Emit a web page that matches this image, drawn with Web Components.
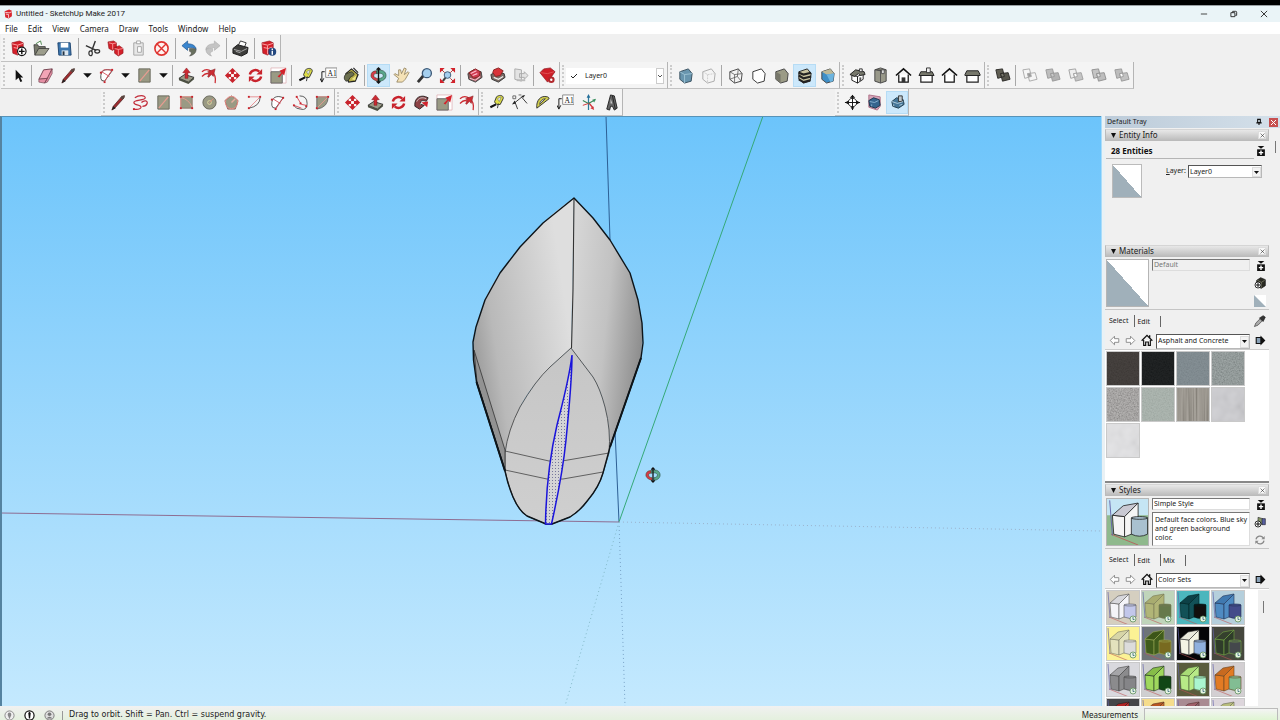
<!DOCTYPE html>
<html lang="en">
<head>
<meta charset="utf-8">
<title>Untitled - SketchUp Make 2017</title>
<style>
  html, body { margin: 0; height: 100%; }
  body { background: #000; font: 8px/12px "Noto Sans", "Open Sans", sans-serif; color: #222; overflow: hidden; }
</style>
</head>
<body>
<sk-app></sk-app>
<script>
const RED = '#c8232c', TAN = '#9a9a84';

const box = (f, s, extra = '') =>
  `<path d="M3 5l9-3 4 5-1 8-7 2-5-4z" fill="${f}" stroke="${s}" stroke-linejoin="round"/>${extra}`;
const cubes = (a, b, c, s) =>
  `<path d="M2 3l7-1 2 8-7 2z" fill="${a}" stroke="${s}" stroke-linejoin="round"/><path d="M7 7l8-1 2 7-8 2z" fill="${b}" stroke="${s}" stroke-linejoin="round"/><path d="M7 7l3-.5 1 3.500-3 .8z" fill="${c}" stroke="${s}"/>`;
const dots = (...p) => p.map(([x, y]) => `<rect x="${x - 1}" y="${y - 1}" width="2" height="2" fill="${RED}"/>`).join('');
const ruby = '<path d="M2 3l8-2 4 2v8l-6 5-5-2z" fill="#d4202a" stroke="#8e1018" stroke-width=".6"/><path d="M2 4l6 1.500 6-2M4 8l5 1 4-1.500M8 6v9" fill="none" stroke="#ffb5b5" stroke-width=".9"/>';
const orbit = '<path d="M7 4C3 4 1 6 1 9s3 5 7 6v-3c-2 0-4-1-4-3s2-2 3-2z" fill="#d63a48" stroke="#442" stroke-width=".6"/><path d="M7 4c6-2 10 1 10 5s-4 6-7 6v-3c2 0 4-1 4-3s-3-3-7-2z" fill="#5aa88c" stroke="#243" stroke-width=".6"/><path d="M9 1v16M7 3l2-2 2 2M7 15l2 2 2-2" stroke="#111" stroke-width="1.400" fill="none"/>';
const home = (roof, wall, extra = '') =>
  `<path d="M4 8v8h10V8" fill="${wall}" stroke="#111" stroke-width="1.300"/><path d="M1 9l8-7 8 7" fill="${roof}" stroke="#111" stroke-width="1.700"/>${extra}`;
const rotate = c => `<path d="M3 8a6 6 0 0 1 10-3M15 10a6 6 0 0 1-10 3" fill="none" stroke="${c}" stroke-width="2.600"/><path d="M16 2v6h-6zM2 16v-6h6z" fill="${c}"/>`;

const ICONS = {
  logo: '<path d="M3 4l8-3 5 2v10l-6 4-6-2z" fill="#d9252e"/><path d="M4 6l7 1 5-2M5 9l5 1v6" fill="none" stroke="#fff" stroke-width="1.300"/>',
  'new': ruby + '<circle cx="12.500" cy="12" r="4.500" fill="#fff" stroke="#111" stroke-width="1.200"/><path d="M9.500 12h6M12.500 9v6" stroke="#111" stroke-width="1.500"/>',
  open: '<path d="M2 16L1 5h4l1 2h7v3" fill="#77796b" stroke="#333" stroke-width=".8"/><path d="M2 16l4-7h11l-5 7z" fill="#9c9d8c" stroke="#333" stroke-width=".8"/><path d="M3 4l5-3 1 4" fill="#fff" stroke="#49854a"/>',
  save: '<path d="M2 3h13l1 13H3z" fill="#3c76ae" stroke="#1d4470"/><path d="M5 3h8v5H5z" fill="#fff"/><path d="M6 11h7v5H6z" fill="#dce6ee"/><path d="M7 12h2v4H7z" fill="#234"/>',
  cut: '<path d="M2 6l11 5M12 1L8 12" stroke="#333" stroke-width="1.500"/><ellipse cx="7" cy="14" rx="1.800" ry="2.600" fill="none" stroke="#333" stroke-width="1.300"/><ellipse cx="14" cy="12" rx="2.600" ry="1.800" fill="none" stroke="#333" stroke-width="1.300"/>',
  copy: '<path d="M1 2l6-1 3 2v5l-4 3-4-2zM8 8l5-2 4 3v5l-5 3-4-3z" fill="#d4202a" stroke="#8a1016" stroke-width=".6"/><path d="M2 3l4 1 4-1M6 4v6M8 9l4 1 5-1M12 10v6" fill="none" stroke="#ffb1b1" stroke-width=".8"/>',
  paste: '<path d="M4 3h10v13H4z" fill="#e7e7e7" stroke="#a5a5a5"/><path d="M7 1h4v3H7zM8 7h4v6H8z" fill="#fff" stroke="#a5a5a5"/>',
  erase: '<circle cx="9" cy="9" r="7" fill="#fff2f0" stroke="#df3430" stroke-width="1.700"/><path d="M4 4l10 10M14 4L4 14" stroke="#df3430" stroke-width="1.500"/>',
  undo: '<path d="M1 6l6-5v3c6 0 9 3 9 6-2-2-5-2-9-2v3z" fill="#3a86cf" stroke="#1d558e" stroke-width=".7"/><path d="M9 9c4 0 6 0 7 1 0 4-3 6-7 7 2-2 3-4 0-5z" fill="#69705f" stroke="#444" stroke-width=".5"/>',
  redo: '<path d="M17 6l-6-5v3C5 4 2 7 2 10c2-2 5-2 9-2v3zM9 9c-4 0-7 0-7 1 0 4 3 6 6 7-2-2-2-4 1-5z" fill="#c4c4c4" stroke="#aaa" stroke-width=".6"/>',
  print: '<path d="M6 7l3-6 6 2-2 5z" fill="#fff" stroke="#333"/><path d="M1 9l5-4 11 3-1 6-6 3-9-3z" fill="#3d3d3b" stroke="#1b1b1b"/><path d="M2 10l8 2 6-3M4 12l5 1.500" fill="none" stroke="#aaa"/>',
  info: ruby + '<circle cx="13" cy="12.500" r="4.200" fill="#24487f"/><path d="M13 11.500v4M13 9v1.500" stroke="#fff" stroke-width="1.500"/>',
  arrow: '<path d="M6 3v11l3-2.500 2 4.500 2-1-2-4h3z" fill="#111"/>',
  eraser: '<path d="M2 13l5-10 9-1-5 10z" fill="#f2a5b6" stroke="#71404c"/><path d="M2 13v3l6 1 3-5zM11 12l5-10v5l-5 9-3 1z" fill="#e58fa4" stroke="#71404c" stroke-width=".7"/>',
  pencil: '<path d="M2 17l1.500-4L13 2l2 2-10 11z" fill="#a02c30" stroke="#4e2221" stroke-width=".8"/><path d="M2 17l1.500-4L6 15z" fill="#222"/><path d="M13 2l2-1 1 1-1 2-2 2-2-2z" fill="#5a4741"/>',
  arc2: `<path d="M3 12C2 3 9 1 15 4L7 15Q3 15 3 12z" fill="#fff" stroke="#444"/><path d="M4 5l8 5M7 15L15 3M3 6l3-3 9 0" fill="none" stroke="#d85560"/>${dots([7, 16], [15, 3], [3, 6])}`,
  rect: `<path d="M3 2h12v14H3z" fill="${TAN}" stroke="#68685b"/><path d="M4 15L14 3" stroke="#e89c91" stroke-width="1.300"/>`,
  rect2: `<path d="M3 3h12v12H3z" fill="${TAN}" stroke="#8c7668"/><path d="M3 4q8 1 12 10M3 3v12M3 3h12" fill="none" stroke="#e89c91"/>${dots([3, 3], [15, 15], [3, 15], [15, 3])}`,
  push: '<path d="M1 12l6-4 10 3-6 5z" fill="#9b9b87" stroke="#333"/><path d="M1 12v2l10 4 6-5v-2l-6 5z" fill="#4c5042"/><path d="M7.500 12V6H5l4-5 4 5h-2.500v6z" fill="#cb2b32" stroke="#7f1018" stroke-width=".5"/>',
  offset: '<path d="M1 5C7 0 17 5 15 17M1 10c3-3 6-4 8-2" fill="none" stroke="#cc2b32" stroke-width="1.300"/><path d="M7 10l2-3-2-2 8-3-2 8-2-2-3 3z" fill="#cb2b32" stroke="#7d1b20" stroke-width=".5"/>',
  move: '<path d="M9 1l4 4h-2.500v2.500H13V5l4 4-4 4v-2.500h-2.500V13H13l-4 4-4-4h2.500v-2.500H5V13L1 9l4-4v2.500h2.500V5H5z" fill="#c8232c"/><path d="M7.500 7.500h3v3h-3z" fill="#fff"/>',
  rotate: rotate(RED),
  scale: '<path d="M1 1h16v16H1z" fill="#fff" stroke="#dba6ac" stroke-width=".7"/><path d="M1 5h12v12H1z" fill="#9a9a84" stroke="#666"/><path d="M8 10l4-4-2-2 7-3-2 8-2-2-3 4z" fill="#d3222b"/>',
  tape: '<path d="M9 3c4-3 8-1 7 2l-3 6c-3 1-6-1-6-3z" fill="#dede47" stroke="#333"/><path d="M10 5l4-2-2 5z" fill="#eee" stroke="#555" stroke-width=".5"/><path d="M8 10l-6 3 1 2 6-3z" fill="#111"/><path d="M11 10l-1 5" stroke="#333"/>',
  text: '<path d="M6 1h12v10H6z" fill="#fff" stroke="#888"/><text x="8" y="9" font-family="Liberation Serif,serif" font-size="8" fill="#111">A1</text><path d="M5 5H2v10M0 12l2 4 2-4" fill="none" stroke="#111"/>',
  paint: '<path d="M3 7l6-5 7 6-3 7-7 1z" fill="#b9b04a" stroke="#222" stroke-width="1.200"/><path d="M4 7c-4 2-3 8 0 8s2-4 5-5 4-3 0-5z" fill="#6b6f4e" stroke="#222" stroke-width=".8"/><path d="M11 1l5 5" stroke="#222" stroke-width="1.200"/><path d="M9 13l5-4-1 5z" fill="#eee484"/>',
  orbit,
  hand: '<path d="M4 16l2-4-5-4 1-1 4 2 0-6 2 0 1 4 3-6 2 1-2 6 4-3 1 1-4 7-3 3z" fill="#f5e2b6" stroke="#8a7a55" stroke-width=".8"/>',
  zoom: '<path d="M2 16l6-7" stroke="#333" stroke-width="3"/><circle cx="11.500" cy="6.500" r="4.800" fill="#a5cfee" stroke="#3d5977" stroke-width="1.400"/>',
  extents: '<path d="M8 10l-4 5" stroke="#444" stroke-width="2.200"/><circle cx="9" cy="8.500" r="3.500" fill="#a5cfee" stroke="#3d5977"/><path d="M1 1h5L1 6zM17 1h-5l5 5zM1 17h5l-5-5zM17 17h-5l5-5z" fill="#d3222b"/><path d="M3 3l3 3M15 3l-3 3M15 15l-3-3" stroke="#a33"/>',
  model1: '<path d="M2 7l6-4 8 2 1 6-7 5-7-3z" fill="#8b5a5a" stroke="#444"/><path d="M3 6l7-4 5 3-1 5-6 2z" fill="#cf3a50" stroke="#822"/><path d="M5 7l6-3M7 9l5-2M4 12l6 2 5-4" stroke="#fbc" stroke-width="1.200" fill="none"/>',
  model2: '<path d="M2 8l6-3 8 2 1 4-7 5-7-3z" fill="#7a6a64" stroke="#333"/><path d="M5 3l5-2 5 3-3 5-5 1-3-4z" fill="#d8343a" stroke="#822"/><path d="M5 11l5 2 5-3" fill="none" stroke="#eee" stroke-width="1.300"/>',
  share: '<path d="M3 2l7 1v12l-7-2zM8 7h5v-2l4 4-4 4v-2H8z" fill="#e3e3e3" stroke="#aaa"/><path d="M5 14h9" stroke="#bbb" stroke-width="2"/>',
  extension: '<path d="M1 6l4-4 7-1 5 4-8 11z" fill="#cf1f28" stroke="#8a1118" stroke-width=".7"/><path d="M2 6l7 1 7-2" fill="none" stroke="#e56a6a" stroke-width=".7"/><circle cx="13" cy="13.500" r="3.500" fill="#b1282d"/><circle cx="13" cy="13.500" r="1.300" fill="#fff"/>',
  xray: box('#6895ae', '#38505f', '<path d="M3 5l5 3 8-1M8 8v9" stroke="#9cc2d3" fill="none"/>'),
  back: box('#f4f4f4', '#a9a9a9', '<path d="M3 5l5 3 8-1M8 8v9" stroke="#ccc" fill="none" stroke-dasharray="2 1"/>'),
  wire: box('none', '#444', '<path d="M3 5l5 3 8-1M8 8v9M12 2l-1 8 4 5M3 13l8-3" stroke="#555" fill="none" stroke-width=".8"/>'),
  hidden: box('#fff', '#333'),
  shaded: box('#9b9b86', '#444', '<path d="M3 5l5 3v9l-5-4z" fill="#77776a"/>'),
  textured: box('#c8c3a0', '#222', '<path d="M3 6l5 2 8-2M3 9l5 3 8-2M3 13l5 3 7-2" stroke="#222" stroke-width="2.200" fill="none"/>'),
  mono: box('#3f8fc7', '#444', '<path d="M3 5l9-3 4 5-8 1z" fill="#bdb896"/><path d="M8 8l8-1-1 8-3 1z" fill="#6cb4df"/>'),
  iso: '<path d="M3 9v5l6 3v-7zM9 10v7l6-4V7z" fill="#fff" stroke="#222"/><path d="M1 8l6-5 9 2 1 3-5 1-2-2-4 3z" fill="#77786c" stroke="#222"/><path d="M11 2h3v3h-3z" fill="#eee" stroke="#333"/><path d="M11 11h2v4h-2z" fill="#555"/>',
  top: '<path d="M3 3l6-2 6 2v12l-6 2-6-2z" fill="#99998a" stroke="#444"/><path d="M9 4v13M3 3l6 1 6-1" stroke="#555"/><path d="M10 3h3v4h-3z" fill="#ddd" stroke="#555"/>',
  front: home('none', '#fff', '<path d="M7 16v-5h4v5z" fill="#333"/>'),
  right: '<path d="M3 9h12v7H3z" fill="#fff" stroke="#222" stroke-width="1.300"/><path d="M1 9l2-4h12l2 4z" fill="#77786c" stroke="#222"/><path d="M9 1h4v5H9z" fill="#eee" stroke="#333"/>',
  rear: home('none', '#fff'),
  left: '<path d="M3 9h12v7H3z" fill="#fff" stroke="#222" stroke-width="1.300"/><path d="M1 8l2-4h12l2 4v1H1z" fill="#77786c" stroke="#222"/>',
  shell: cubes('#615f54', '#57564d', '#77766a', '#2c2b27'),
  isect: cubes('#f5f5f5', '#f5f5f5', '#999', '#aaa'),
  union: cubes('#bdbdbd', '#b3b3b3', '#c9c9c9', '#9a9a9a'),
  subtract: cubes('#eee', '#c4c4c4', '#fff', '#a2a2a2'),
  trim: cubes('#c4c4c4', '#bdbdbd', '#e5e5e5', '#929292'),
  split: cubes('#bcbcbc', '#c2c2c2', '#fff', '#999'),
  freehand: '<path d="M2 16c5 1 9-1 7-3S2 12 2 9s12-2 12-5S7 1 3 4M10 9c3-3 7-2 6 1s-3 3-5 3" fill="none" stroke="#c22c3a" stroke-width="1.300"/>' + dots([2, 16]),
  circle: `<circle cx="9" cy="9" r="7" fill="${TAN}" stroke="#66665a"/><circle cx="9" cy="9" r="2" fill="none" stroke="#ded79d"/><path d="M9 9l4-4" stroke="#df8d7f"/>`,
  polygon: `<path d="M9 2l7 5-3 9H5L2 7z" fill="${TAN}" stroke="#9d655f"/><circle cx="9" cy="9" r="6.500" fill="none" stroke="#e58d86"/><path d="M9 9l4-4" stroke="#e8b0a0" stroke-width="1.500"/>`,
  arcA: `<path d="M15 3q0 10-12 12" fill="none" stroke="#555"/><path d="M3 3h12L3 15" fill="none" stroke="#e58d91"/>${dots([3, 3], [15, 3], [3, 15])}`,
  arcB: `<path d="M3 12C2 3 9 1 15 4L7 15Q3 15 3 12z" fill="#fff" stroke="#555"/><path d="M4 5l8 5M7 16l8-12" stroke="#d44d58"/>${dots([15, 4], [7, 16], [3, 6])}`,
  arcC: `<path d="M8 2q8 0 8 8t-7 6q-5 0-7-4" fill="none" stroke="#555"/><path d="M5 3l5 8 5 1M2 12l8 3" fill="none" stroke="#d44d58"/>${dots([5, 3], [2, 12], [9, 10], [15, 13])}`,
  pie: `<path d="M3 3h12q0 11-12 13z" fill="${TAN}" stroke="#666"/><path d="M15 3L3 15M3 3h12" stroke="#e39a90"/>${dots([3, 3], [15, 3], [3, 15])}`,
  follow: '<path d="M2 13C1 3 9 0 16 4l-2 4c-4-2-7-1-6 3l4 1-5 4z" fill="#8f4346" stroke="#2b2222"/><path d="M4 8c2-4 6-5 10-3M8 11c0-3 4-3 8-2" fill="none" stroke="#ccc"/><path d="M9 9l7-1-1 6z" fill="#d3222b"/>',
  dim: '<path d="M3 10L13 2M4 8l3 8M11 3l6 7" fill="none" stroke="#333"/><path d="M2 2h3v3H2zM8 1h3" fill="none" stroke="#666"/><path d="M1 11l3-4 1 3zM15 1l-4 1 2 2z" fill="#222"/>',
  protractor: '<path d="M3 15C2 7 7 1 14 3c1 0 2 1 2 2z" fill="#d1ce4d" stroke="#333"/><path d="M6 11c0-3 3-6 6-6z" fill="#f1f1e8" stroke="#444"/>',
  axes: '<path d="M9 9l5 6" stroke="#d3343a" stroke-width="1.500"/><path d="M9 9V2M9 9v8" stroke="#2c7a9b" stroke-width="1.300"/><path d="M9 10l7-4M3 7l6 3" stroke="#3b8456" stroke-width="1.200"/><path d="M3 12l6-2" stroke="#d3343a"/><path d="M9 0l2 4H7z" fill="#266f9b"/><path d="M17 5l-2 4-2-3z" fill="#38905e"/><path d="M15 17l-4-2 3-2z" fill="#d3343a"/>',
  text3d: '<path d="M4 16L8 1l4 1 3 13-3 2-2-4H8l-1 4z" fill="#666" stroke="#222"/><path d="M8 5l2 5H8z" fill="#ccc"/><path d="M10 2l3 14" stroke="#222"/>',
  position: '<circle cx="9" cy="9" r="4.500" fill="#fff" stroke="#222"/><path d="M1 9h16M9 1v16" stroke="#111"/><path d="M1 9l4-2v4zM17 9l-4-2v4zM9 1l3 3H6zM9 17l2-3H7z" fill="#111"/>',
  section1: '<path d="M3 1l12 2v10l-3 4-9-3z" fill="#d6a4b9" stroke="#ad7187"/><path d="M3 7l5-3 6 2 1 6-5 3-6-2z" fill="#35658e" stroke="#1d354a"/><path d="M4 8l5 1 4-2M6 11v2" stroke="#9dc4e0" stroke-width=".8" fill="none"/>',
  section2: '<path d="M3 8l5-4 7 2 1 5-6 4-6-2z" fill="#467799" stroke="#223d4c"/><path d="M10 2h4v6h-4z" fill="#c0c9ce" stroke="#333"/><path d="M3 8l6 2 6-2M5 11v2M11 12l3-1" stroke="#cfe2ec" stroke-width=".8" fill="none"/>',
  down: '<path d="M3 6h12l-6 6z" fill="#111"/>',
  min: '<path d="M2 9h14" stroke="#333" stroke-width="2"/>',
  restore: '<path d="M2 6h9v9H2zM6 6V3h7q2 0 2 2v7h-3" fill="none" stroke="#222" stroke-width="2"/>',
  close: '<path d="M2 2l14 14M16 2L2 16" stroke="#222" stroke-width="2"/>',
  pin: '<path d="M6 3h6v7H6zM3 11h12M9 11v5" fill="none" stroke="#111" stroke-width="2.500"/>',
  expand: '<path d="M3 0h12l-6 5z" fill="#111"/><path d="M2 6h14v12H2z" fill="#111"/><path d="M9 8v8M5 12h8" stroke="#fff" stroke-width="2.500"/>',
  createMat: '<path d="M4 5l6-4 7 3v9l-6 4-7-3z" fill="#292a22" stroke="#111"/><path d="M5 5l6 3 5-3M11 8v8" stroke="#8b8b72" fill="none"/><circle cx="6" cy="12" r="4.500" fill="#fff" stroke="#111" stroke-width="1.300"/><path d="M3 12h6M6 9v6" stroke="#111" stroke-width="1.500"/>',
  createStyle: '<path d="M6 2l7 2v8l-7 1z" fill="#889867" stroke="#333"/><path d="M12 4h5v9h-5z" fill="#5961a2" stroke="#223"/><circle cx="6" cy="12" r="4.500" fill="#fff" stroke="#111" stroke-width="1.300"/><path d="M3 12h6M6 9v6" stroke="#111" stroke-width="1.500"/>',
  refresh: '<path d="M3 8a6 6 0 0 1 11-2M15 10a6 6 0 0 1-11 2" fill="none" stroke="#888" stroke-width="1.800"/><path d="M16 3v5h-5zM2 15v-5h5z" fill="#888"/>',
  half: '<path d="M0 0h18v18H0z" fill="#fff"/><path d="M0 0l18 18H0z" fill="#a0b0ba"/>',
  dropper: '<path d="M2 16l2-5 6-6 3 3-6 6z" fill="#aaa" stroke="#444"/><path d="M9 4l2-1 3-2 3 2-2 4-1 2z" fill="#333" stroke="#222"/>',
  prev: '<path d="M2 9l7-7v4h7v6H9v4z" fill="#fff" stroke="#888" stroke-width="1.500"/>',
  next: '<path d="M16 9L9 2v4H2v6h7v4z" fill="#fff" stroke="#888" stroke-width="1.500"/>',
  home: '<path d="M4 9v8h3v-5h4v5h3V9" fill="#fff" stroke="#111" stroke-width="1.800"/><path d="M1 10l8-8 8 8M13 2v4" fill="none" stroke="#111" stroke-width="2"/>',
  details: '<path d="M2 4h8v10H2z" fill="#89a1b7" stroke="#111" stroke-width="1.800"/><path d="M9 1l8 8-8 8z" fill="#111"/>',
  geo: '<circle cx="9" cy="9" r="7.500" fill="#eee" stroke="#888" stroke-width="1.500"/><path d="M9 15L6 8q0-4 3-4t3 4z" fill="#888"/>',
  claim: '<circle cx="9" cy="9" r="7.500" fill="#fff" stroke="#111" stroke-width="2"/><path d="M9 3l2 2-1 9H8L7 5z" fill="#111"/>',
  user: '<circle cx="9" cy="9" r="7.500" fill="#ddd" stroke="#777" stroke-width="1.500"/><circle cx="9" cy="7" r="3" fill="#777"/><path d="M4 14q5-6 10 0" fill="#777"/>'
};

const svg = (name, size = 18) =>
  `<svg width="${size}" height="${size}" viewBox="0 0 18 18" aria-hidden="true">${ICONS[name] || ''}</svg>`;

const BASE = `
  * { box-sizing: border-box; }
  svg { display: block; flex: none; }
  button { font: inherit; color: inherit; border: 0; padding: 0; margin: 0; background: none; display: flex; align-items: center; justify-content: center; }
  input, textarea, select { font: inherit; color: inherit; margin: 0; border-radius: 0; outline: 0; }
`;

class SkElement extends HTMLElement {
  connectedCallback() {
    if (this.shadowRoot) return;
    this.attachShadow({ mode: 'open' }).innerHTML = `<style>${BASE}${this.css()}</style>${this.html()}`;
  }
  css() { return ':host{display:block}'; }
  html() { return '<slot></slot>'; }
  attr(n, d = '') { return this.getAttribute(n) ?? d; }
}

customElements.define('sk-title-bar', class extends SkElement {
  css() { return `
    :host { display: flex; align-items: center; height: 17px; background: #eaf4f7; padding: 0 8px 0 3px; gap: 3px; border-top: 1px solid #9aa0a3; }
    h1 { flex: 1; margin: 0; font: inherit; font-family: Roboto, sans-serif; color: #222; }
    .win { display: flex; gap: 14px; }
    button { width: 16px; height: 14px; }`; }
  html() { return `${svg('logo', 10)}<h1>Untitled - SketchUp Make 2017</h1>
    <div class="win"><button aria-label="Minimize">${svg('min', 8)}</button><button aria-label="Restore">${svg('restore', 8)}</button><button aria-label="Close">${svg('close', 8)}</button></div>`; }
});

customElements.define('sk-menu-bar', class extends SkElement {
  css() { return `
    :host { display: block; background: #fff; height: 12px; }
    nav { display: flex; padding-left: 5px; gap: 10px; }
    button { height: 13px; }`; }
  html() { return `<nav>${this.attr('items').split(',').map(t => `<button>${t}</button>`).join('')}</nav>`; }
});

customElements.define('sk-toolbar', class extends SkElement {
  css() { return `
    :host { display: flex; align-items: center; height: 27px; padding-left: 6px; background: #f4f4f4;
      border-right: 1px solid #b5b5b5; border-bottom: 1px solid #c2c2c2; position: relative; flex: none; }
    :host::before { content: ""; position: absolute; left: 2px; top: 3px; bottom: 2px; border-left: 2px dotted #ccc; }
    :host([spread]) { justify-content: space-between; }
    :host([size="wide"]) { width: 234px; }
    :host([size="mid"]) { width: 144px; }
    :host([size="small"]) { width: 74px; }`; }
});

customElements.define('sk-tool', class extends SkElement {
  css() { return `
    :host { display: block; width: 23px; height: 23px; flex: none; }
    :host([narrow]) { width: 15px; }
    :host([tight]) { width: 22px; }
    button { width: 100%; height: 100%; }
    :host([active]) button { background: #cce8fb; border: 1px solid #b6dcf5; }`; }
  html() { const n = this.attr('icon'); return `<button aria-label="${n}">${svg(n, n === 'down' ? 13 : 17)}</button>`; }
});

customElements.define('sk-separator', class extends SkElement {
  css() { return `
    :host { display: block; width: 1px; height: 21px; margin: 0 2px 0 1px; background: #a8a8a8; flex: none; }
    :host([roomy]) { margin: 0 2px; }`; }
  html() { return ''; }
});

customElements.define('sk-layer-select', class extends SkElement {
  css() { return `
    :host { display: block; width: 101px; padding: 2px 3px 0 0; }
    .combo { display: flex; align-items: center; height: 16px; background: #fff; position: relative; padding-left: 5px; }
    select { flex: 1; height: 16px; border: 0; background: none; appearance: none; padding: 0 0 0 8px; font-size: 7px; }
    .chev { position: absolute; right: 0; top: 0; width: 8px; height: 16px; border: 1px solid #ccc; pointer-events: none; display: flex; align-items: center; justify-content: center; }`; }
  html() { return `<div class="combo"><svg width="6" height="6" viewBox="0 0 6 6"><path d="M0 3l2 2 4-4" fill="none" stroke="#222"/></svg>
    <select aria-label="Active layer"><option>Layer0</option></select>
    <span class="chev"><svg width="6" height="4" viewBox="0 0 6 4"><path d="M1 1l2 2 2-2" fill="none" stroke="#555"/></svg></span></div>`; }
});

const tools = (list, attrs = '') => list.split(' ').map(n => {
  if (n === '|') return `<sk-separator ${attrs}></sk-separator>`;
  const active = n.endsWith('*'), icon = n.replace('*', '');
  return `<sk-tool icon="${icon}" ${icon === 'down' ? 'narrow' : ''} ${active ? 'active' : ''} ${attrs}></sk-tool>`;
}).join('');

customElements.define('sk-toolbars', class extends SkElement {
  css() { return `
    :host { display: block; background: #f0f0f0; padding: 1px 0 0 1px; overflow: hidden; }
    .row { display: flex; }
    .draw { padding-left: 100px; }
    .section { margin-left: 212px; }`; }
  html() { return `
    <div class="row"><sk-toolbar>${tools('new open save | cut copy paste erase | undo redo | print | info', 'roomy')}</sk-toolbar></div>
    <div class="row">
      <sk-toolbar>${tools('arrow | eraser pencil down arc2 down rect down | push offset move rotate scale | tape text paint | orbit* hand zoom extents | model1 model2 share | extension')}</sk-toolbar>
      <sk-toolbar><sk-layer-select></sk-layer-select></sk-toolbar>
      <sk-toolbar>${tools('xray back | wire hidden shaded textured* mono')}</sk-toolbar>
      <sk-toolbar>${tools('iso top front right rear left')}</sk-toolbar>
      <sk-toolbar>${tools('shell | isect union subtract trim split')}</sk-toolbar>
    </div>
    <div class="row draw">
      <sk-toolbar spread size="wide">${tools('pencil freehand rect rect2 circle polygon arcA arcB arcC pie', 'tight')}</sk-toolbar>
      <sk-toolbar spread size="mid">${tools('move push rotate follow scale offset', 'tight')}</sk-toolbar>
      <sk-toolbar spread size="mid">${tools('tape dim protractor text axes text3d', 'tight')}</sk-toolbar>
      <sk-toolbar spread size="small" class="section">${tools('position section1 section2*', 'tight')}</sk-toolbar>
    </div>`; }
});

customElements.define('sk-viewport', class extends SkElement {
  css() { return `
    :host { display: block; flex: 1; min-width: 0; position: relative; overflow: hidden;
      background: linear-gradient(#6cc4fb, #90d3fc 40%, #c4e9fe); border-left: 2px solid #5583a0; border-top: 1px solid #5793b8; }
    svg { width: 100%; height: 100%; }`; }
  html() { return `<svg viewBox="2 117 1099 589" preserveAspectRatio="xMidYMid slice" role="img" aria-label="Model view">
    <defs>
      <linearGradient id="l" x1="0" y1="1" x2="1" y2=".6"><stop offset="0" stop-color="#858585"/><stop offset=".35" stop-color="#b9b9b9"/><stop offset="1" stop-color="#dedede"/></linearGradient>
      <linearGradient id="r" x1="0" y1=".3" x2="1" y2=".65"><stop offset="0" stop-color="#d6d6d6"/><stop offset=".5" stop-color="#c2c2c2"/><stop offset="1" stop-color="#8b8b8b"/></linearGradient>
      <linearGradient id="b" x1="0" y1="0" x2="0" y2="1"><stop offset="0" stop-color="#c6c6c6"/><stop offset="1" stop-color="#cfcfcf"/></linearGradient>
      <pattern id="d" width="3" height="3" patternUnits="userSpaceOnUse"><rect width="3" height="3" fill="#d4d4d6"/><rect width="1" height="1" fill="#77779c"/></pattern>
    </defs>
    <g fill="none" stroke-width="1">
      <path d="M606 116l4 124M615 430l4 92" stroke="#2d5f94"/>
      <path d="M763 116L619 522" stroke="#35a978"/>
      <path d="M1 513l618 9" stroke="#8e6d92"/>
      <path d="M619 522l6 184" stroke="#7aa4c8" stroke-dasharray="1 3"/>
      <path d="M619 522l-54 184" stroke="#83b9c8" stroke-dasharray="1 3"/>
      <path d="M619 522l482 9" stroke="#9bb3cd" stroke-dasharray="1 3"/>
    </g>
    <path d="M574 198Q556 210 543 223L520 247 500 273Q490 287 485 300 478 318 474 340L473 360 477 382 505 471V453Q507 438 520 407 528 390 550 367L571 348z" fill="url(#l)"/>
    <path d="M574 198L593 218 610 240 630 273 638 300 642 323V343L641 358 609 450Q611 430 605 407 601 390 593 377L571 348z" fill="url(#r)"/>
    <path d="M571 348L550 367Q535 381 520 407 508 430 505 453V471Q508 485 513 497 519 511 527 516L546 524H552L570 517Q580 511 588 500 599 487 603 473L609 453Q611 430 605 407 600 388 593 377z" fill="url(#b)" stroke="#3a3a3a" stroke-width=".8"/>
    <path d="M474 350L505 450V470L477 382z" fill="#929292" stroke="#333" stroke-width=".8"/>
    <path d="M574 198L573 290 571.500 348" stroke="#333" stroke-width="1.100" fill="none"/>
    <path d="M505 451l44 10h13l47-8M505 470l42 9h16l40-7" fill="none" stroke="#444" stroke-width=".8"/>
    <path d="M574 198L543 223 520 247 500 273 485 300 476 327 473 342 473.500 360 476.500 382 505 471Q508 485 513 497 519 511 527 516L546 524H552L570 517Q580 511 588 500 599 487 603 473L610 447 641 358 643 343 642 323 638 300 630 273 610 240 593 218z" fill="none" stroke="#0d1419" stroke-width="1.400" stroke-linejoin="round"/>
    <path d="M476.500 382L505 471M610 447L641 358" stroke="#0d1419" stroke-width="2" fill="none"/>
    <path d="M572 355C569 380 562 405 557 425 550 455 546 490 545.500 524H551.500C558 495 563 470 566 440 569 410 572 380 572 355z" fill="url(#d)" stroke="#1a14dc" stroke-width="1.500"/>
    <svg x="645" y="467" width="16" height="16" viewBox="0 0 18 18" style="width:16px;height:16px">${orbit}</svg>
  </svg>`; }
});

customElements.define('sk-panel', class extends SkElement {
  css() { return `
    :host { display: block; }
    header { display: flex; align-items: center; height: 12px; padding: 0 2px 0 5px; gap: 3px; background: linear-gradient(#e8e8e8, #bdbdbd); border: 1px solid #bbb; border-top-color: #d5d5d5; }
    h2 { margin: 0; flex: 1; font: inherit; font-size: 8px; line-height: 10px; color: #222; }
    button { width: 8px; height: 8px; background: #f8f8f8; border: 1px solid #ddd; }`; }
  html() { return `<header><svg width="5" height="5" viewBox="0 0 5 5"><path d="M0 0h5l-2.500 5z" fill="#111"/></svg><h2>${this.attr('heading')}</h2><button aria-label="Close ${this.attr('heading')}">${svg('close', 5)}</button></header><slot></slot>`; }
});

const FIELDS = `
  .pick { position: relative; display: block; }
  .pick select { width: 100%; height: 100%; appearance: none; background: #fff; border: 1px solid #b8b8b8; border-top-color: #555; border-left-color: #555; padding: 0 0 0 1px; line-height: 12px; }
  .pick i { position: absolute; right: 1px; top: 2px; bottom: 1px; width: 9px; background: #f3f3f3; border: 1px solid #ddd; display: flex; align-items: center; justify-content: center; pointer-events: none; }
  .diag { background: linear-gradient(to top right, #a0b0ba 50%, #fff 50%); border: 1px solid #bbb; }
`;
const DOWN = '<i><svg width="5" height="3" viewBox="0 0 5 3"><path d="M0 0h5L2.500 3z" fill="#111"/></svg></i>';

customElements.define('sk-entity-info', class extends SkElement {
  css() { return FIELDS + `
    :host { display: block; height: 104px; padding: 4px 3px 0 1px; }
    .top { display: flex; justify-content: space-between; align-items: center; height: 12px; padding-left: 5px; }
    b { color: #111; font-size: 8px; }
    hr { margin: 1px 12px 5px 0; border: 0; border-top: 1px solid #b5b5b5; }
    .row { display: flex; align-items: flex-start; padding: 0 4px 0 6px; }
    .diag { width: 30px; height: 34px; margin-right: 24px; }
    label { margin-top: 1px; width: 22px; }
    .pick { flex: 1; height: 13px; margin-top: 1px; }`; }
  html() { return `<div class="top"><b>28 Entities</b><button aria-label="Details">${svg('expand', 10)}</button></div><hr>
    <div class="row"><div class="diag"></div><label for="layer"><u>L</u>ayer:</label><span class="pick"><select id="layer"><option>Layer0</option></select>${DOWN}</span></div>`; }
});

/* Header block shared by the Materials and Styles panels. */
customElements.define('sk-preview', class extends SkElement {
  css() { return FIELDS + `
    :host { display: flex; gap: 3px; height: 53px; padding: 2px 3px 0 1px; border-bottom: 1px solid #c5c5c5; }
    .thumb { width: 43px; height: 48px; overflow: hidden; flex: none; border: 1px solid #b5b5b5; }
    .fields { width: 98px; display: flex; flex-direction: column; gap: 2px; }
    input, textarea { width: 100%; background: #fff; border: 1px solid #ddd; border-top-color: #777; border-left-color: #777; padding: 0 0 0 1px; display: block; }
    input { height: 12px; }
    input:disabled { background: #f0f0f0; color: #777; }
    textarea { height: 34px; line-height: 9px; resize: none; overflow: hidden; padding: 2px 0 2px 2px; }
    .side { flex: 1; display: flex; flex-direction: column; align-items: flex-end; gap: 6px; padding-top: 2px; }`; }
  html() {
    const style = this.hasAttribute('styles');
    const icons = style ? ['expand', 'createStyle', 'refresh'] : ['expand', 'createMat', 'half'];
    return `<div class="thumb ${style ? '' : 'diag'}">${style ? houseSvg('#c5e5f4,#f5f5f5,#c9c9d3,#a9c1d0,#222', 0, 46) : ''}</div>
      <div class="fields"><input aria-label="Name" value="${style ? 'Simple Style' : 'Default'}" ${style ? '' : 'disabled'}>
      ${style ? '<textarea aria-label="Description">Default face colors. Blue sky and green background color.</textarea>' : ''}</div>
      <div class="side">${icons.map(n => `<button aria-label="${n}">${svg(n, n === 'expand' ? 10 : 12)}</button>`).join('')}</div>`;
  }
});

function houseSvg(spec, badge = 1, size = 34) {
  const [bg, front, top, cyl, line] = spec.split(',');
  const ground = badge ? '' : '<path d="M0 12h34v22H0z" fill="#8fb98d"/>';
  return `<svg width="${size}" height="${size}" viewBox="0 0 34 34" preserveAspectRatio="none" aria-hidden="true"><rect width="34" height="34" fill="${bg}"/>${ground}
    <path d="M3 26l20 8" stroke="#b55" stroke-width=".6" fill="none"/><path d="M2 1l2 26" stroke="#66a" stroke-width=".7"/>
    <path d="M4 12l9 1v15L5 26z" fill="${front}" stroke="${line}" stroke-width=".6"/>
    <path d="M4 12L12 5l11-2-10 10z" fill="${top}" stroke="${line}" stroke-width=".6"/>
    <path d="M13 13L23 3v21l-10 4z" fill="${front}" stroke="${line}" stroke-width=".6"/>
    <path d="M18 14v12q6 3 12 0V14z" fill="${cyl}" stroke="${line}" stroke-width=".6"/><ellipse cx="24" cy="14" rx="6" ry="1" fill="${cyl}" stroke="${line}" stroke-width=".6"/>
    ${badge ? '<circle cx="27" cy="28" r="3" fill="#e8f4e4" stroke="#5f8f5c" stroke-width=".8"/><path d="M27 26v2.500h1.500" stroke="#367" stroke-width=".8" fill="none"/>' : ''}</svg>`;
}

function textureSvg(spec) {
  const [color, grain, kind] = spec.split(',');
  const freq = kind === 'wood' ? '0.5 0.01' : kind === 'soft' ? '0.08' : '0.7';
  return `<svg width="34" height="34" viewBox="0 0 34 34" aria-hidden="true"><filter id="n" x="0" y="0" width="1" height="1"><feTurbulence type="fractalNoise" baseFrequency="${freq}" numOctaves="2"/><feColorMatrix values="1 0 0 0 0 1 0 0 0 0 1 0 0 0 0 0 0 0 0 1"/></filter>
    <rect width="34" height="34" fill="${color}"/><rect width="34" height="34" filter="url(#n)" opacity="${grain}"/></svg>`;
}

customElements.define('sk-swatch', class extends SkElement {
  css() { return `
    :host { display: block; width: 34px; height: 35px; }
    button { width: 34px; height: 35px; padding: 1px; border: 1px solid #c9c9c9; background: #e5e5e5; overflow: hidden; }`; }
  html() { return `<button aria-label="${this.attr('kind')} swatch">${this.attr('kind') === 'style' ? houseSvg(this.attr('spec')) : textureSvg(this.attr('spec'))}</button>`; }
});

customElements.define('sk-browser', class extends SkElement {
  css() { return FIELDS + `
    :host { display: block; }
    .tabs { display: flex; align-items: center; height: 22px; padding: 0 3px 0 4px; }
    .tabs button { height: 12px; padding-right: 6px; }
    .tabs button:not(:first-child) { border-left: 1px solid #666; padding: 1px 10px 0 2px; }
    .tabs .end { border-left: 1px solid #666; height: 11px; flex: 1; }
    .nav { display: flex; align-items: center; height: 16px; padding: 0 3px 0 4px; gap: 5px; }
    .nav .pick { width: 96px; height: 15px; margin: 2px 0 0 -2px; }
    .nav button { flex: none; }
    .nav .more { margin-left: auto; }
    .list { height: 132px; margin-top: 1px; padding-top: 1px; background: #fff; border-top: 1px solid #ccc; display: flex; justify-content: space-between; }
    .grid { display: grid; grid-template-columns: repeat(4, 34px); gap: 1px; padding-left: 1px; align-content: start; }
    .bar { width: 11px; background: #f0f0f0; padding: 11px 5px; }
    .bar::before { content: ""; display: block; height: 12px; width: 1px; background: #777; }`; }
  html() {
    const kind = this.attr('kind'), tabs = this.attr('tabs').split(',');
    return `<div class="tabs">${tabs.map(t => `<button>${t}</button>`).join('')}<span class="end"></span>${kind === 'material' ? svg('dropper', 13) : ''}</div>
    <div class="nav"><button aria-label="Back">${svg('prev', 11)}</button><button aria-label="Forward">${svg('next', 11)}</button><button aria-label="In model">${svg('home', 12)}</button>
      <span class="pick"><select aria-label="Collection"><option>${this.attr('collection')}</option></select>${DOWN}</span><button class="more" aria-label="Details">${svg('details', 11)}</button></div>
    <div class="list"><div class="grid">${this.attr('specs').split(';').map(s => `<sk-swatch kind="${kind}" spec="${s}"></sk-swatch>`).join('')}</div>${kind === 'style' ? '<div class="bar"></div>' : ''}</div>`;
  }
});

customElements.define('sk-tray', class extends SkElement {
  css() { return `
    :host { display: flex; flex-direction: column; width: 175px; background: #f0f0f0; overflow: hidden; flex: none; font-size: 7px; }
    .head { display: flex; align-items: center; height: 12px; flex: none; padding: 0 2px; background: linear-gradient(90deg, #bccbd9, #d4e0ea); gap: 6px; }
    .head span { flex: 1; line-height: 12px; }
    .head .x { width: 9px; height: 9px; background: #c75050; color: #fff; }
    .body { display: flex; flex: 1; min-height: 0; padding-top: 1px; }
    .panels { width: 164px; overflow: hidden; }
    .bar { width: 1px; height: 12px; margin: 12px 0 0 6px; background: #777; }
    .line { border-bottom: 2px solid #888; margin-bottom: 1px; }`; }
  html() { return `<div class="head"><span>Default Tray</span><button aria-label="Pin">${svg('pin', 8)}</button><button class="x" aria-label="Close tray"><svg width="5" height="5" viewBox="0 0 5 5"><path d="M0 0l5 5M5 0L0 5" stroke="#fff"/></svg></button></div>
    <div class="body"><div class="panels">
      <sk-panel heading="Entity Info"><sk-entity-info></sk-entity-info></sk-panel>
      <sk-panel heading="Materials"><sk-preview></sk-preview>
        <sk-browser class="line" kind="material" tabs="Select,Edit" collection="Asphalt and Concrete"
          specs="#35302d,.1,fine;#0c0f10,.1,fine;#78848a,.12,fine;#818c8b,.3,fine;#979492,.4,fine;#a5b0a9,.15,fine;#827a6c,.45,wood;#cdcdd1,.15,soft;#e3e3e5,.12,soft"></sk-browser></sk-panel>
      <sk-panel heading="Styles"><sk-preview styles></sk-preview>
        <sk-browser kind="style" tabs="Select,Edit,Mix" collection="Color Sets"
          specs="#d5cfc0,#f4f4f8,#d8d8dd,#c2c7ea,#555;#c0d5bb,#b1b577,#a8ac70,#66794b,#775;#4cb6bd,#125157,#0d4046,#120f0d,#022;#b5cfdc,#4f8bc2,#4079b0,#434b8a,#235;#fcf294,#e3e2bd,#d7d5a7,#dcdcdc,#776;#6e7478,#405c1c,#3c5518,#786a20,#9a5;#050507,#f4f4e4,#e9e9dc,#8fb0de,#333;#45473d,#2f3c2a,#35402d,#44484c,#7a4;#d9d9de,#8b8b8d,#a5a5a8,#858588,#444;#cfcfd0,#9fd85d,#86bd48,#114715,#232;#5a5c3d,#b7ea87,#a9dc76,#aaf5cf,#453;#d3cfd2,#e27b24,#c76a20,#82bd93,#642;#454548,#c33030,#b22222,#c33030,#222;#f5dc8c,#ca6b30,#b95522,#a83e20,#532;#a98b92,#8b636b,#a0606a,#8b636b,#533;#ddd6dc,#c9cd8c,#b9bd7c,#c9cd8c,#665"></sk-browser></sk-panel>
    </div><div class="bar"></div></div>`; }
});

customElements.define('sk-status-bar', class extends SkElement {
  css() { return `
    :host { display: flex; height: 14px; align-items: flex-start; padding-left: 4px; background: linear-gradient(#f1f1f1, #e4f0de); flex: none; line-height: 10px; }
    .icons { display: flex; gap: 9px; padding: 4px 7px 0 0; height: 14px; overflow: hidden; }
    p { margin: 4px 0 0; padding-left: 7px; flex: 1; position: relative; font-family: "DejaVu Sans", sans-serif; }
    p::before { content: ""; position: absolute; left: 0; top: 1px; width: 1px; height: 9px; background: #999; }
    label { margin: 4px 6px 0 0; }
    input { width: 134px; height: 12px; margin: 2px 2px 0 0; border: 1px solid #bbb; border-bottom: 0; background: linear-gradient(#f4f4f4, #dff5d2); }`; }
  html() { return `<div class="icons">${svg('geo', 11)}${svg('claim', 11)}${svg('user', 11)}</div><p>Drag to orbit. Shift = Pan. Ctrl = suspend gravity.</p><label for="m">Measurements</label><input id="m">`; }
});

customElements.define('sk-app', class extends SkElement {
  css() { return `
    :host { display: flex; flex-direction: column; height: 100vh; padding-top: 5px; background: #000; box-sizing: border-box; }
    main { flex: 1; min-height: 0; display: flex; background: #f0f0f0; }
    .gap { width: 4px; background: linear-gradient(90deg, #a9dcfa 1px, #e9f1f5 1px); flex: none; }`; }
  html() { return `<sk-title-bar></sk-title-bar><sk-menu-bar items="File,Edit,View,Camera,Draw,Tools,Window,Help"></sk-menu-bar>
    <sk-toolbars></sk-toolbars><main><sk-viewport></sk-viewport><div class="gap"></div><sk-tray></sk-tray></main><sk-status-bar></sk-status-bar>`; }
});
</script>
</body>
</html>
